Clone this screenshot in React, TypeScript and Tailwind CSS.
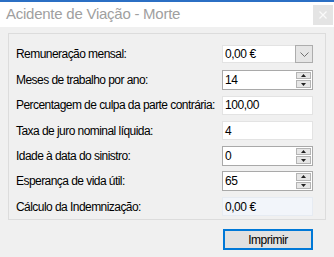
import React from 'react';

const font = { fontFamily: '"Segoe UI", "Liberation Sans", Arial, sans-serif' };

function Label({ text }: { text: string }) {
  return <span className="text-[12px] tracking-[-0.55px] text-black leading-none">{text}</span>;
}

function TextBox({ value, readOnly }: { value: string; readOnly?: boolean }) {
  return (
    <div
      className={`w-[91px] h-[19px] border flex items-center pl-[2px] text-[12px] tracking-[-0.45px] text-black ${
        readOnly ? 'bg-[#f2f5fa] border-[#e6ebf2]' : 'bg-white border-[#e3e3e3]'
      }`}
    >
      {value}
    </div>
  );
}

function Combo({ value }: { value: string }) {
  return (
    <div className="w-[91px] h-[18px] flex bg-white border border-[#e3e3e3]">
      <div className="flex-1 flex items-center pl-[2px] text-[12px] tracking-[-0.45px] text-black">{value}</div>
      <div className="w-[18px] h-[18px] -mt-px -mr-px bg-[#e5e5e5] border border-[#adadad] flex items-center justify-center">
        <svg width="9" height="5" viewBox="0 0 9 5">
          <path d="M0.5 0.5 L4.5 4.5 L8.5 0.5" fill="none" stroke="#707070" strokeWidth="1" />
        </svg>
      </div>
    </div>
  );
}

function Spinner({ value }: { value: string }) {
  return (
    <div className="w-[91px] h-[20px] flex bg-white border border-[#a9a9a9]">
      <div className="flex-1 flex items-center pl-[2px] text-[12px] tracking-[-0.45px] text-black">{value}</div>
      <div className="w-[15px] my-[1px] mr-[1px] flex flex-col gap-px">
        <div className="flex-1 bg-[#e6e6e6] border border-[#b4b4b4] flex items-center justify-center">
          <svg width="5" height="3" viewBox="0 0 5 3">
            <path d="M2.5 0 L5 3 L0 3 Z" fill="#202020" />
          </svg>
        </div>
        <div className="flex-1 bg-[#e6e6e6] border border-[#b4b4b4] flex items-center justify-center">
          <svg width="5" height="3" viewBox="0 0 5 3">
            <path d="M0 0 L5 0 L2.5 3 Z" fill="#202020" />
          </svg>
        </div>
      </div>
    </div>
  );
}

const rows: { label: string; kind: 'combo' | 'spin' | 'text' | 'ro'; value: string; h: string }[] = [
  { label: 'Remuneração mensal:', kind: 'combo', value: '0,00 €', h: 'h-[25px]' },
  { label: 'Meses de trabalho por ano:', kind: 'spin', value: '14', h: 'h-[26px]' },
  { label: 'Percentagem de culpa da parte contrária:', kind: 'text', value: '100,00', h: 'h-[25px]' },
  { label: 'Taxa de juro nominal líquida:', kind: 'text', value: '4', h: 'h-[26px]' },
  { label: 'Idade à data do sinistro:', kind: 'spin', value: '0', h: 'h-[25px]' },
  { label: 'Esperança de vida útil:', kind: 'spin', value: '65', h: 'h-[26px]' },
  { label: 'Cálculo da Indemnização:', kind: 'ro', value: '0,00 €', h: 'h-[25px]' },
];

export default function App() {
  return (
    <div className="w-[334px] h-[257px] bg-[#f0f0f0] flex flex-col overflow-hidden" style={font}>
      <div className="h-[2px] bg-[#2b6fc4]" />
      <div className="h-[25px] bg-white flex items-center justify-between pl-[6px] pr-[1px]">
        <span className="text-[15px] text-[#a0a0a0] tracking-[-0.25px]">Acidente de Viação - Morte</span>
        <div className="w-[20px] h-[20px] bg-[#e4e4e4] flex items-center justify-center">
          <svg width="8" height="8" viewBox="0 0 8 8">
            <path d="M0.5 0.5 L7.5 7.5 M7.5 0.5 L0.5 7.5" stroke="#fafafa" strokeWidth="1.2" />
          </svg>
        </div>
      </div>
      <div className="flex-1 px-[8px] pt-[6px] flex flex-col">
        <div className="h-[187px] border border-[#dcdcdc] pt-[8px] pl-[7px] pr-[12px] flex flex-col">
          {rows.map((r) => (
            <div key={r.label} className={`${r.h} flex items-center justify-between`}>
              <Label text={r.label} />
              {r.kind === 'combo' && <Combo value={r.value} />}
              {r.kind === 'spin' && <Spinner value={r.value} />}
              {r.kind === 'text' && <TextBox value={r.value} />}
              {r.kind === 'ro' && <TextBox value={r.value} readOnly />}
            </div>
          ))}
        </div>
        <div className="flex justify-end pr-[13px] mt-[9px]">
          <button className="w-[90px] h-[21px] border-2 border-[#0078d7] bg-[#e1e1e1] text-[12px] tracking-[-0.45px] text-black flex items-center justify-center">
            Imprimir
          </button>
        </div>
      </div>
    </div>
  );
}
